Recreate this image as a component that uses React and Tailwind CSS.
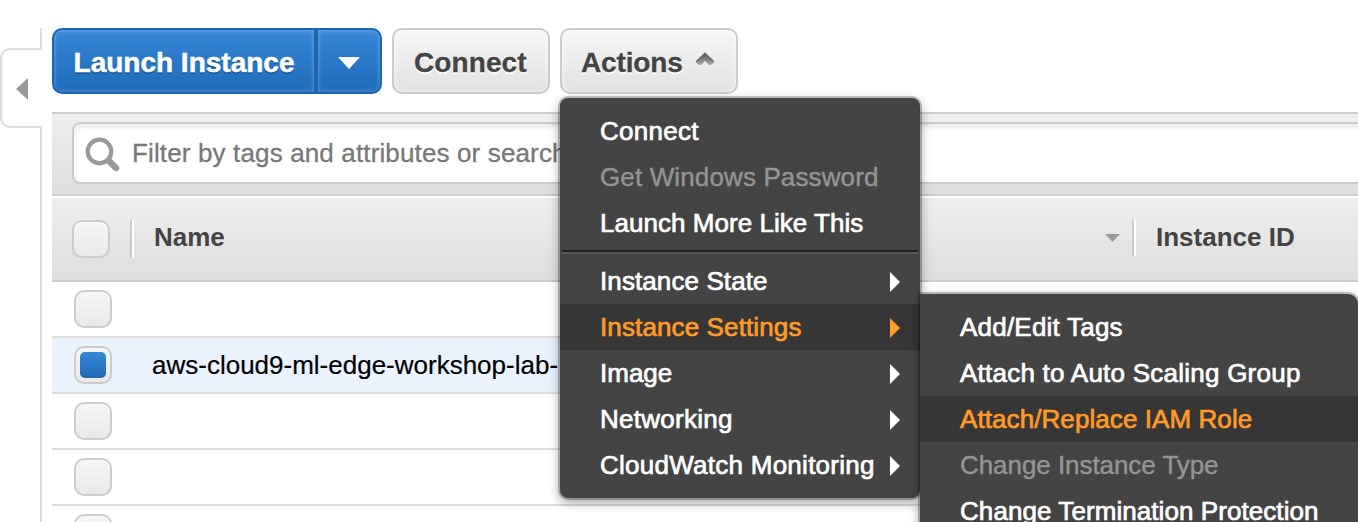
import React from "react";

const MENU = [
  { label: "Connect", tracking: "tracking-[0.28px]" },
  { label: "Get Windows Password", disabled: true, tracking: "tracking-[0.13px]" },
  { label: "Launch More Like This", tracking: "tracking-[0.04px]" },
  { separator: true },
  { label: "Instance State", sub: true, tracking: "tracking-[0.1px]" },
  { label: "Instance Settings", sub: true, active: true, tracking: "tracking-[0.12px]" },
  { label: "Image", sub: true, tracking: "tracking-[0px]" },
  { label: "Networking", sub: true, tracking: "tracking-[0.28px]" },
  { label: "CloudWatch Monitoring", sub: true, tracking: "tracking-[0.26px]" },
];

const SUBMENU = [
  { label: "Add/Edit Tags", tracking: "tracking-[0.22px]" },
  { label: "Attach to Auto Scaling Group", tracking: "tracking-[0.24px]" },
  { label: "Attach/Replace IAM Role", active: true, tracking: "tracking-[0.08px]" },
  { label: "Change Instance Type", disabled: true, tracking: "tracking-[-0.06px]" },
  { label: "Change Termination Protection", tracking: "tracking-[0.07px]" },
];

function MenuItem({ item }) {
  if (item.separator) {
    return <div className="mx-0.5 my-1 h-1 border-t-2 border-[#222] bg-[#555]" />;
  }
  const tone = item.active
    ? "bg-[#363636] text-[#ff9a26]"
    : item.disabled
      ? "text-[#949494]"
      : "text-white";
  return (
    <div
      className={`flex h-[46px] items-center justify-between pl-10 pr-5 text-[26px] leading-[46px] whitespace-nowrap ${tone} ${item.disabled ? "[-webkit-text-stroke:0.4px_currentColor]" : "[-webkit-text-stroke:0.7px_currentColor]"}`}
    >
      <span className={item.tracking}>{item.label}</span>
      {item.sub && (
        <svg className="mt-0.5 h-5 w-2.5 shrink-0" viewBox="0 0 10 20">
          <path d="M0 0L10 10L0 20Z" fill="currentColor" />
        </svg>
      )}
    </div>
  );
}

function Menu({ items, className }) {
  return (
    <div
      className={`absolute bg-[#444] py-2.5 shadow-[0_0_0_2px_rgba(0,0,0,0.22),0_4px_12px_rgba(0,0,0,0.4)] ${className}`}
    >
      {items.map((item, i) => (
        <MenuItem key={i} item={item} />
      ))}
    </div>
  );
}

function Checkbox({ checked }) {
  return (
    <div className="flex size-[38px] shrink-0 items-center justify-center rounded-[10px] border-2 border-[#ccc] bg-linear-to-b from-[#f6f6f6] to-[#e9e9e9]">
      {checked && (
        <div className="size-[26px] rounded-[5px] bg-linear-to-b from-[#3787d8] to-[#1c69b7]" />
      )}
    </div>
  );
}

function Row({ name, selected }) {
  return (
    <div
      className={`flex h-14 shrink-0 items-center border-b-2 border-[#ddd] pl-[22px] ${selected ? "bg-[#eaf2fe]" : "bg-white"}`}
    >
      <Checkbox checked={selected} />
      <span className="ml-10 text-[26px] leading-[54px] whitespace-nowrap text-black [-webkit-text-stroke:0.2px_black]">
        {name}
      </span>
    </div>
  );
}

function Divider({ className }) {
  return <div className={`w-1 shrink-0 border-l-2 border-[#ccc] bg-white ${className}`} />;
}

const GRAY_BUTTON =
  "flex h-[66px] items-center rounded-[10px] border-2 border-[#ccc] bg-linear-to-b from-[#f7f7f7] to-[#e0e0e0] text-[28px] leading-[62px] font-bold text-[#444] shadow-[inset_0_0_6px_rgba(255,255,255,0.7)] [text-shadow:0_2px_0_#fff] [-webkit-text-stroke:0.3px_#444]";

export default function App() {
  return (
    <div
      className="relative flex h-[522px] w-[1358px] overflow-hidden bg-white antialiased"
      style={{ fontFamily: '"Liberation Sans", Arial, sans-serif' }}
    >
      <aside className="flex w-[42px] shrink-0 flex-col pt-7">
        <div className="h-5 border-r-2 border-[#ddd]" />
        <button className="flex h-20 items-center rounded-l-[10px] border-2 border-r-0 border-[#ddd] bg-white pl-3.5 shadow-[inset_1px_1px_2px_rgba(0,0,0,0.05)]">
          <svg className="mt-0.5 h-[22px] w-3" viewBox="0 0 12 22">
            <path d="M12 0V22L0 11Z" fill="#999" />
          </svg>
        </button>
        <div className="flex-1 border-r-2 border-[#ddd]" />
      </aside>

      <main className="ml-2.5 flex min-w-0 flex-1 flex-col pt-7">
        <div className="mb-[18px] flex gap-2.5">
          <div className="flex h-[66px] w-[330px] overflow-hidden rounded-[10px] border-2 border-[#1b66b4] bg-[#1b66b4] text-[28px] font-bold text-white">
            <button className="w-[260px] bg-linear-to-b from-[#3787d8] to-[#1c69b7] pt-[3px] text-center leading-[59px] whitespace-nowrap shadow-[inset_0_0_4px_1px_rgba(255,255,255,0.25)] [text-shadow:0_2px_0_rgba(0,0,0,0.25)] [-webkit-text-stroke:0.5px_white]">
              Launch Instance
            </button>
            <button className="ml-1 flex flex-1 items-center justify-center bg-linear-to-b from-[#3787d8] to-[#1c69b7] shadow-[inset_0_0_4px_1px_rgba(255,255,255,0.25)]">
              <svg className="mt-1 h-3 w-[22px]" viewBox="0 0 22 12">
                <path d="M0 0H22L11 12Z" fill="white" />
              </svg>
            </button>
          </div>
          <button className={`w-[158px] pl-5 ${GRAY_BUTTON}`}>
            <span className="pt-[3px] leading-[59px] tracking-[0.1px]">Connect</span>
          </button>
          <button className={`w-[178px] pl-[19px] ${GRAY_BUTTON}`}>
            <span className="w-[101px] pt-[3px] leading-[59px] tracking-[-0.15px]">Actions</span>
            <svg className="mb-1 ml-[13px] h-[14px] w-5" viewBox="0 0 20 14">
              <defs>
                <linearGradient id="caret" x1="0" y1="0" x2="0" y2="1">
                  <stop offset="0" stopColor="#555" />
                  <stop offset="1" stopColor="#aaa" />
                </linearGradient>
              </defs>
              <path d="M10 0.5L19.5 10L16 13H14L10 9L6 13H4L0.5 10Z" fill="url(#caret)" />
              <path d="M1.5 9.5L10 1.5L18.5 9.5" fill="none" stroke="#666" strokeWidth="1.5" />
            </svg>
          </button>
        </div>

        <div className="h-[84px] shrink-0 overflow-hidden border-y-2 border-[#ccc] bg-linear-to-b from-[#eee] to-[#dedede] pt-2 pl-5">
          <div className="-mr-3 flex h-[62px] items-center rounded-l-[8px] border-2 border-r-0 border-[#ccc] bg-white pl-2.5 shadow-[inset_0_3px_6px_rgba(0,0,0,0.1)]">
            <svg className="mt-1 h-9 w-9" viewBox="0 0 36 36">
              <circle cx="15.5" cy="14.5" r="11.8" fill="none" stroke="#999" strokeWidth="4.2" />
              <path d="M24.5 23.5L32 31" stroke="#999" strokeWidth="6.5" strokeLinecap="round" />
            </svg>
            <span className="ml-3 text-[26px] leading-[58px] tracking-[0.14px] whitespace-nowrap text-[#777] [-webkit-text-stroke:0.3px_#777]">
              Filter by tags and attributes or search
            </span>
          </div>
        </div>

        <div className="flex h-[86px] shrink-0 border-t-2 border-b-2 border-t-white border-b-[#ccc] bg-linear-to-b from-[#eee] to-[#dedede] pt-[22px] pl-5 text-[26px] leading-[38px] font-bold text-[#444]">
          <Checkbox />
          <Divider className="ml-5 h-[38px]" />
          <span className="-mt-0.5 ml-5 flex-1">Name</span>
          <svg className="mt-3.5 mr-3 h-[9px] w-[15px]" viewBox="0 0 15 9">
            <path d="M0 0H15L7.5 8Z" fill="#999" />
          </svg>
          <Divider className="h-9" />
          <span className="-mt-0.5 ml-5 w-[202px]">Instance ID</span>
        </div>

        <Row />
        <Row name="aws-cloud9-ml-edge-workshop-lab-" selected />
        <Row />
        <Row />
        <Row />
      </main>

      <Menu items={MENU} className="top-[98px] left-[560px] w-[360px] rounded-[8px]" />
      <Menu items={SUBMENU} className="top-[294px] left-[920px] w-[438px] rounded-tr-[10px]" />
    </div>
  );
}
